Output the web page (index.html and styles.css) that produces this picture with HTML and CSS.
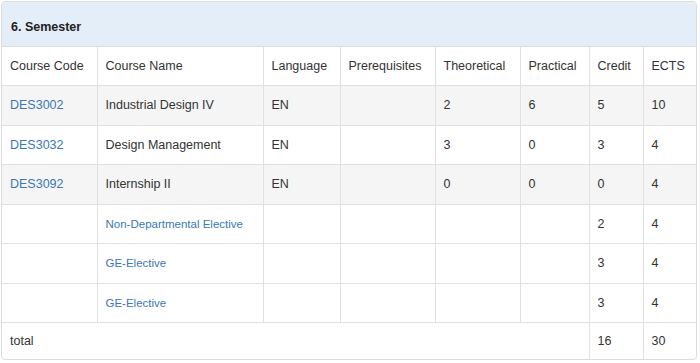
FILE: index.html
```html
<!DOCTYPE html>
<html>
<head>
<meta charset="utf-8">
<link rel="stylesheet" href="styles.css">
</head>
<body>
<div class="panel">
  <div class="panel-heading">6. Semester</div>
  <table class="courses">
    <colgroup>
      <col class="c-code"><col class="c-name"><col class="c-lang"><col class="c-pre">
      <col class="c-theo"><col class="c-prac"><col class="c-cred"><col class="c-ects">
    </colgroup>
    <thead>
      <tr>
        <td>Course Code</td><td>Course Name</td><td>Language</td><td>Prerequisites</td>
        <td>Theoretical</td><td>Practical</td><td>Credit</td><td>ECTS</td>
      </tr>
    </thead>
    <tbody>
      <tr class="odd">
        <td><a href="#">DES3002</a></td><td>Industrial Design IV</td><td>EN</td><td></td>
        <td>2</td><td>6</td><td>5</td><td>10</td>
      </tr>
      <tr>
        <td><a href="#">DES3032</a></td><td>Design Management</td><td>EN</td><td></td>
        <td>3</td><td>0</td><td>3</td><td>4</td>
      </tr>
      <tr class="odd">
        <td><a href="#">DES3092</a></td><td>Internship II</td><td>EN</td><td></td>
        <td>0</td><td>0</td><td>0</td><td>4</td>
      </tr>
      <tr>
        <td></td><td><a href="#" class="elective">Non-Departmental Elective</a></td><td></td><td></td>
        <td></td><td></td><td>2</td><td>4</td>
      </tr>
      <tr>
        <td></td><td><a href="#" class="elective">GE-Elective</a></td><td></td><td></td>
        <td></td><td></td><td>3</td><td>4</td>
      </tr>
      <tr>
        <td></td><td><a href="#" class="elective">GE-Elective</a></td><td></td><td></td>
        <td></td><td></td><td>3</td><td>4</td>
      </tr>
      <tr class="total">
        <td colspan="6">total</td><td>16</td><td>30</td>
      </tr>
    </tbody>
  </table>
</div>
</body>
</html>
```
FILE: styles.css
```css
html, body {
  margin: 0;
  padding: 0;
  background: #fff;
}
body {
  font-family: "Liberation Sans", Arial, Helvetica, sans-serif;
  font-size: 12.5px;
  color: #333;
}
.panel {
  margin: 1px;
  width: 694px;
  border: 1px solid #dcdcdc;
  border-radius: 4px;
  overflow: hidden;
}
.panel-heading {
  background: #e3eef9;
  height: 41px;
  padding-top: 3px;
  line-height: 44px;
  padding-left: 9px;
  font-weight: bold;
  color: #222;
  border-bottom: 1px solid #dcdcdc;
}
.courses {
  width: 694px;
  table-layout: fixed;
  border-collapse: collapse;
}
.c-code { width: 95px; }
.c-name { width: 166px; }
.c-lang { width: 77px; }
.c-pre { width: 95px; }
.c-theo { width: 85px; }
.c-prac { width: 69px; }
.c-cred { width: 54px; }
.c-ects { width: 53px; }
.courses td {
  border: 1px solid #e0e0e0;
  padding: 9px 8px 9px 8px;
  line-height: 20.43px;
  vertical-align: middle;
  white-space: nowrap;
}
.courses tr td:first-child { border-left: 0; }
.courses tr td:last-child { border-right: 0; }
.courses thead tr td { border-top: 0; }
.courses tr.total td { border-bottom: 0; line-height: 18px; }
.courses tr.odd td { background: #f5f5f5; }
.courses a {
  color: #3a78b6;
  text-decoration: none;
}
.courses a.elective {
  font-size: 11.5px;
}
```
